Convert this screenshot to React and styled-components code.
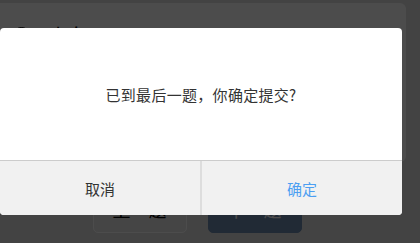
import React from "react";
import styled, { createGlobalStyle } from "styled-components";

const Global = createGlobalStyle`
	html, body {
		margin: 0;
		padding: 0;
		background: #e0e0e0;
		font-family: "Noto Sans CJK SC", "Liberation Sans", sans-serif;
	}
`;

const Page = styled.div`
	position: relative;
	width: 420px;
	height: 243px;
	overflow: hidden;
	background: #e0e0e0;
	display: flex;
	flex-direction: column;
`;

const Card = styled.div`
	margin-top: 3px;
	width: 406px;
	height: 159px;
	background: #fff;
	border-radius: 0 6px 6px 0;
	padding: 18px 13px 0;
	box-sizing: border-box;
	display: flex;
	align-items: flex-start;
	gap: 18px;
	font-size: 20px;
	color: #000;
`;

const Radio = styled.span`
	width: 15px;
	height: 15px;
	border: 1.5px solid #000;
	border-radius: 50%;
	margin-top: 6px;
`;

const Actions = styled.div`
	display: flex;
	justify-content: center;
	gap: 21px;
	margin-top: 31px;
	padding-right: 26px;
`;

const NavButton = styled.div`
	width: 94px;
	height: 40px;
	box-sizing: border-box;
	padding-bottom: 8px;
	border-radius: 5px;
	display: flex;
	align-items: center;
	justify-content: center;
	white-space: nowrap;
	font-size: 18px;
	background: ${(p) => (p.primary ? "#6e8cb2" : "#e8e8e8")};
	color: ${(p) => (p.primary ? "#fff" : "#000")};
	border: 1px solid ${(p) => (p.primary ? "#6e8cb2" : "#fff")};
`;

const Mask = styled.div`
	position: absolute;
	inset: 0;
	background: rgba(0, 0, 0, 0.7);
`;

const Dialog = styled.div`
	position: absolute;
	left: 0;
	top: 28px;
	width: 402px;
	border-radius: 4px;
	overflow: hidden;
	background: #fff;
	display: flex;
	flex-direction: column;
`;

const Message = styled.div`
	height: 132px;
	display: flex;
	align-items: center;
	justify-content: center;
	font-size: 15px;
	letter-spacing: 0.3px;
	color: #333;
	border-bottom: 1px solid #cccccc;
`;

const Footer = styled.div`
	display: flex;
	height: 54px;
	background: #f1f1f1;
`;

const FooterButton = styled.div`
	flex: 1;
	display: flex;
	align-items: center;
	justify-content: center;
	font-size: 15px;
	color: ${(p) => (p.primary ? "#4c9ff2" : "#333")};
	& + & {
		border-left: 2px solid #dddddd;
	}
`;

export default function App() {
	return (
		<>
			<Global />
			<Page>
				<Card>
					<Radio />
					<span>小车</span>
				</Card>
				<Actions>
					<NavButton>上一题</NavButton>
					<NavButton primary>下一题</NavButton>
				</Actions>
				<Mask />
				<Dialog>
					<Message>已到最后一题，你确定提交?</Message>
					<Footer>
						<FooterButton>取消</FooterButton>
						<FooterButton primary>确定</FooterButton>
					</Footer>
				</Dialog>
			</Page>
		</>
	);
}
